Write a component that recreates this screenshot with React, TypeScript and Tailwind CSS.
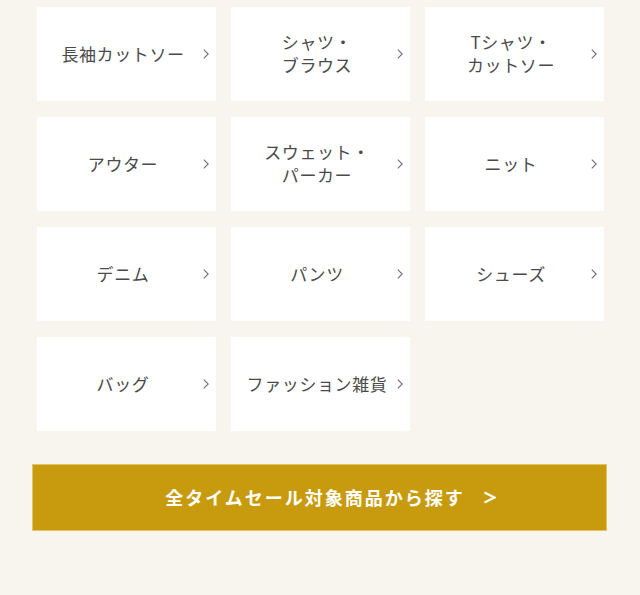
import React from "react";

const items: string[][] = [
  ["長袖カットソー"],
  ["シャツ・", "ブラウス"],
  ["Tシャツ・", "カットソー"],
  ["アウター"],
  ["スウェット・", "パーカー"],
  ["ニット"],
  ["デニム"],
  ["パンツ"],
  ["シューズ"],
  ["バッグ"],
  ["ファッション雑貨"],
];

function Chevron() {
  return (
    <svg width="6" height="10" viewBox="0 0 6 10" className="shrink-0">
      <path d="M0.8 0.6 L5.2 5 L0.8 9.4" fill="none" stroke="#6f6f6f" strokeWidth="1.1" />
    </svg>
  );
}

export default function App() {
  return (
    <div
      className="w-[640px] h-[595px] bg-[#f7f5ee] overflow-hidden"
      style={{ fontFamily: '"Noto Sans CJK JP", "Noto Sans", sans-serif' }}
    >
      <div className="pt-[7px] pl-[37px] w-[604px]">
        <div className="grid grid-cols-3 gap-x-[15px] gap-y-[16px]">
          {items.map((lines, i) => (
            <div key={i} className="bg-white h-[94px] flex items-center">
              <div className="flex-1 pl-[6px] pb-[2px] text-center text-[17px] leading-[23px] tracking-[0.6px] text-[#4a4a4a]">
                {lines.map((l, j) => (
                  <div key={j}>{l}</div>
                ))}
              </div>
              <div className="mr-[7px] flex items-center">
                <Chevron />
              </div>
            </div>
          ))}
        </div>
      </div>
      <div className="mt-[33px] ml-[32px] w-[575px] h-[67px] bg-[#c89a0e] border border-[#e6c463] flex items-center justify-center pl-[22px] text-white font-bold text-[18px] tracking-[2px]">
        <span>全タイムセール対象商品から探す</span>
        <svg width="13" height="13" viewBox="0 0 13 13" className="ml-[18px] shrink-0">
          <path d="M1.5 1.5 L11.5 6.5 L1.5 11.5" fill="none" stroke="#ffffff" strokeWidth="2.2" strokeLinejoin="miter" />
        </svg>
      </div>
    </div>
  );
}
